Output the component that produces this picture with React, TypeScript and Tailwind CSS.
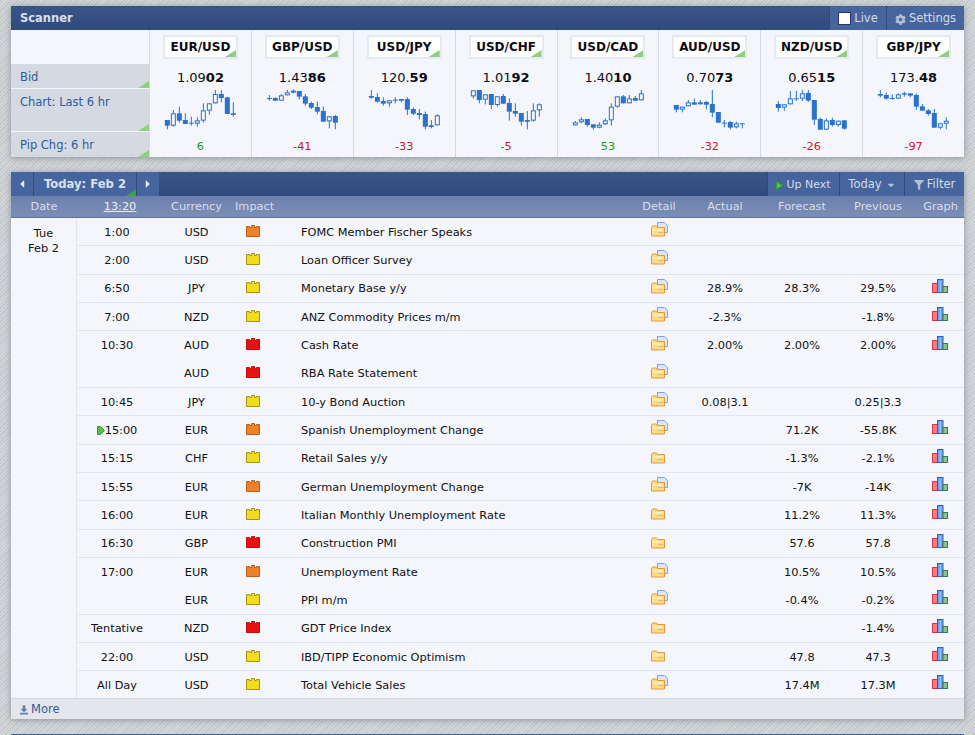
import React from 'react';
import { FaCaretDown, FaCaretLeft, FaCaretRight, FaCog, FaFilter } from 'react-icons/fa';

// candle = [wickTop, wickBottom, bodyTop, bodyBottom, hollow]  (units are 1/3 px)
type Candle = [number, number, number, number, number];

interface Pair {
  name: string;
  bidLight: string;
  bidBold: string;
  change: number;
  candles: Candle[];
}

const pairs: Pair[] = [
  {
    name: 'EUR/USD', bidLight: '1.09', bidBold: '02', change: 6,
    candles: [[105, 133, 105, 122, 0], [75, 125, 85, 122, 1], [65, 113, 85, 107, 0], [85, 117, 105, 117, 0], [95, 122, 113, 116, 0], [97, 125, 106, 116, 1], [55, 113, 76, 107, 1], [55, 89, 55, 77, 1], [15, 55, 27, 55, 1], [15, 52, 27, 39, 0], [37, 87, 37, 87, 0], [52, 95, 85, 90, 0]],
  },
  {
    name: 'GBP/USD', bidLight: '1.43', bidBold: '86', change: -41,
    candles: [[30, 47, 39, 42, 0], [37, 47, 39, 47, 0], [27, 47, 31, 47, 1], [15, 31, 22, 31, 1], [13, 25, 17, 23, 0], [18, 43, 18, 35, 0], [27, 62, 34, 56, 0], [50, 72, 54, 68, 0], [50, 88, 66, 80, 0], [64, 110, 78, 110, 0], [94, 130, 94, 109, 1], [90, 133, 93, 113, 0]],
  },
  {
    name: 'USD/JPY', bidLight: '120.', bidBold: '59', change: -33,
    candles: [[15, 41, 33, 38, 0], [25, 53, 36, 50, 0], [37, 62, 48, 56, 0], [46, 65, 46, 55, 1], [37, 55, 44, 46, 0], [42, 52, 42, 47, 0], [37, 90, 42, 74, 0], [67, 90, 72, 86, 0], [72, 103, 84, 90, 0], [80, 133, 87, 125, 0], [105, 130, 121, 126, 0], [88, 121, 91, 121, 1]],
  },
  {
    name: 'USD/CHF', bidLight: '1.01', bidBold: '92', change: -5,
    candles: [[16, 41, 16, 34, 1], [15, 55, 15, 45, 0], [28, 58, 28, 44, 1], [27, 72, 27, 60, 0], [34, 65, 34, 60, 1], [27, 56, 33, 56, 0], [40, 107, 54, 80, 0], [55, 95, 78, 86, 0], [84, 122, 84, 110, 0], [78, 133, 105, 110, 0], [55, 110, 76, 107, 1], [55, 95, 58, 76, 1]],
  },
  {
    name: 'USD/CAD', bidLight: '1.40', bidBold: '10', change: 53,
    candles: [[108, 121, 112, 121, 1], [97, 115, 103, 112, 1], [102, 125, 102, 120, 0], [118, 134, 118, 128, 0], [112, 130, 119, 128, 1], [100, 120, 106, 118, 1], [55, 122, 65, 106, 1], [34, 68, 34, 65, 1], [30, 55, 34, 55, 0], [30, 55, 40, 55, 1], [33, 47, 39, 47, 0], [15, 46, 25, 46, 1]],
  },
  {
    name: 'AUD/USD', bidLight: '0.70', bidBold: '73', change: -32,
    candles: [[60, 82, 60, 74, 0], [65, 82, 65, 74, 1], [45, 64, 52, 64, 1], [40, 59, 52, 59, 0], [45, 58, 52, 58, 1], [48, 73, 51, 59, 0], [15, 97, 57, 83, 0], [81, 113, 81, 113, 0], [105, 127, 113, 115, 0], [108, 133, 111, 128, 0], [110, 130, 115, 127, 1], [115, 130, 115, 116, 0]],
  },
  {
    name: 'NZD/USD', bidLight: '0.65', bidBold: '15', change: -26,
    candles: [[48, 80, 57, 69, 0], [58, 77, 58, 68, 1], [18, 58, 40, 58, 1], [17, 48, 40, 43, 0], [15, 48, 25, 41, 1], [15, 50, 24, 47, 0], [45, 120, 45, 104, 0], [98, 134, 102, 134, 0], [100, 134, 106, 134, 1], [98, 125, 105, 120, 0], [107, 125, 107, 120, 1], [106, 134, 106, 131, 0]],
  },
  {
    name: 'GBP/JPY', bidLight: '173.', bidBold: '48', change: -97,
    candles: [[15, 37, 27, 32, 0], [22, 44, 30, 41, 0], [28, 44, 39, 41, 0], [25, 41, 28, 41, 1], [20, 35, 25, 29, 0], [25, 37, 25, 32, 0], [25, 75, 30, 65, 0], [57, 77, 64, 77, 0], [72, 92, 76, 87, 0], [72, 128, 84, 128, 0], [115, 133, 115, 128, 1], [97, 133, 107, 116, 1]],
  },
];

type Impact = 'med' | 'low' | 'high';

interface EventRow {
  time: string;
  cur: string;
  impact: Impact;
  title: string;
  doc: boolean;
  actual?: string;
  forecast?: string;
  previous?: string;
  graph: boolean;
  noLine?: boolean;
  next?: boolean;
}

const rows: EventRow[] = [
  { time: '1:00', cur: 'USD', impact: 'med', title: 'FOMC Member Fischer Speaks', doc: true, graph: false },
  { time: '2:00', cur: 'USD', impact: 'low', title: 'Loan Officer Survey', doc: true, graph: false },
  { time: '6:50', cur: 'JPY', impact: 'low', title: 'Monetary Base y/y', doc: true, actual: '28.9%', forecast: '28.3%', previous: '29.5%', graph: true },
  { time: '7:00', cur: 'NZD', impact: 'low', title: 'ANZ Commodity Prices m/m', doc: true, actual: '-2.3%', previous: '-1.8%', graph: true },
  { time: '10:30', cur: 'AUD', impact: 'high', title: 'Cash Rate', doc: true, actual: '2.00%', forecast: '2.00%', previous: '2.00%', graph: true, noLine: true },
  { time: '', cur: 'AUD', impact: 'high', title: 'RBA Rate Statement', doc: true, graph: false },
  { time: '10:45', cur: 'JPY', impact: 'low', title: '10-y Bond Auction', doc: true, actual: '0.08|3.1', previous: '0.25|3.3', graph: false },
  { time: '15:00', cur: 'EUR', impact: 'med', title: 'Spanish Unemployment Change', doc: true, forecast: '71.2K', previous: '-55.8K', graph: true, next: true },
  { time: '15:15', cur: 'CHF', impact: 'low', title: 'Retail Sales y/y', doc: false, forecast: '-1.3%', previous: '-2.1%', graph: true },
  { time: '15:55', cur: 'EUR', impact: 'med', title: 'German Unemployment Change', doc: true, forecast: '-7K', previous: '-14K', graph: true },
  { time: '16:00', cur: 'EUR', impact: 'low', title: 'Italian Monthly Unemployment Rate', doc: false, forecast: '11.2%', previous: '11.3%', graph: true },
  { time: '16:30', cur: 'GBP', impact: 'high', title: 'Construction PMI', doc: false, forecast: '57.6', previous: '57.8', graph: true },
  { time: '17:00', cur: 'EUR', impact: 'med', title: 'Unemployment Rate', doc: true, forecast: '10.5%', previous: '10.5%', graph: true, noLine: true },
  { time: '', cur: 'EUR', impact: 'low', title: 'PPI m/m', doc: true, forecast: '-0.4%', previous: '-0.2%', graph: true },
  { time: 'Tentative', cur: 'NZD', impact: 'high', title: 'GDT Price Index', doc: false, previous: '-1.4%', graph: true },
  { time: '22:00', cur: 'USD', impact: 'low', title: 'IBD/TIPP Economic Optimism', doc: false, forecast: '47.8', previous: '47.3', graph: true },
  { time: 'All Day', cur: 'USD', impact: 'low', title: 'Total Vehicle Sales', doc: true, forecast: '17.4M', previous: '17.3M', graph: true },
];

const columns = 'grid grid-cols-[81px_77px_36px_359px_58px_74px_80px_72px_50px] items-center';

const Corner: React.FC = () => (
  <span className="absolute bottom-0 right-0 w-[11px] h-[7px] bg-[#8fd07f] [clip-path:polygon(100%_0,100%_100%,0_100%)]" />
);

const CandleChart: React.FC<{ candles: Candle[] }> = ({ candles }) => (
  <svg width="102" height="50" viewBox="0 0 306 150" className="block mx-auto">
    {candles.map(([wt, wb, bt, bb, hollow], i) => {
      const x = 52 + i * 18;
      return (
        <g key={i}>
          <rect x={x - 1.5} y={wt} width="3" height={wb - wt} fill="#2a72cc" />
          {hollow ? (
            <rect x={x - 6} y={bt + 1.5} width="12" height={Math.max(bb - bt - 3, 3)} fill="#f4f6fb" stroke="#2a72cc" strokeWidth="3" />
          ) : (
            <rect x={x - 7.5} y={bt} width="15" height={Math.max(bb - bt, 3)} fill="#2a72cc" />
          )}
        </g>
      );
    })}
  </svg>
);

const ImpactIcon: React.FC<{ level: Impact }> = ({ level }) => {
  const colors = {
    med: { fill: '#ee8127', line: '#b8601c' },
    low: { fill: '#f2dc1c', line: '#a69218' },
    high: { fill: '#e81010', line: '#c00d0d' },
  }[level];
  return (
    <svg width="14" height="12" viewBox="0 0 14 12" className="block mx-auto -mt-[2px]">
      <path
        d="M.5 1.500h3v1h2v-2h3v2h2v-1h3v10h-13z"
        fill={colors.fill}
        stroke={colors.line}
        strokeWidth="1"
      />
    </svg>
  );
};

const FolderIcon: React.FC<{ doc: boolean }> = ({ doc }) => (
  <svg width="17" height="15" viewBox="0 0 17 15" className="block mx-auto -mt-[4px]">
    {doc && <path d="M6.500 .5h7l3 3v7h-10z" fill="#d8e6f8" stroke="#7ea6de" strokeWidth="1" />}
    <path d="M.5 5.500v8.500h13v-8.500h-7l-1-1.500h-4z" fill="#fbdc8a" stroke="#e8963c" strokeWidth="1" />
    <path d="M2 8h10" stroke="#fff2c4" strokeWidth="1.500" />
    <path d="M7 10.500h5.500" stroke="#e8b85c" strokeWidth="1" />
  </svg>
);

const GraphIcon: React.FC = () => (
  <svg width="16" height="14" viewBox="0 0 16 14" className="block mx-auto">
    <rect x=".5" y="4.500" width="5" height="9" fill="#f57a86" stroke="#d8384c" />
    <rect x="5.500" y=".5" width="5.500" height="13" fill="#6aa4ec" stroke="#2d62bc" />
    <path d="M8.250 2v11" stroke="#a8ccf6" strokeWidth="1" />
    <rect x="11" y="7.500" width="4.500" height="6" fill="#8cc48c" stroke="#3c7c48" />
  </svg>
);

const BarButton: React.FC<{ className: string; children: React.ReactNode }> = ({ className, children }) => (
  <div className={`flex items-center justify-center h-full pt-[2px] bg-[#46659f] text-[#d5dce9] border-l border-[#2f4a7c] ${className}`}>
    {children}
  </div>
);

export default function App() {
  return (
    <div className="h-[735px] overflow-hidden pt-[6px] px-[11px] text-[11.33px] text-[#111111] font-['DejaVu_Sans','Liberation_Sans',sans-serif] bg-[repeating-linear-gradient(135deg,#c3c7ca_0px,#c3c7ca_1px,#d3d7d9_1px,#d3d7d9_2.500px)]">
      {/* Scanner */}
      <section className="w-[953px] h-[151px] bg-[#f4f6fb] shadow-[0_1px_6px_rgba(60,70,90,0.45)]">
        <div className="flex items-center justify-between h-[24px] bg-gradient-to-b from-[#3a5687] to-[#2f4a7c]">
          <div className="pl-[9px] pt-[2px] font-bold text-[11.5px] text-[#d8e0ee]">Scanner</div>
          <div className="flex h-full text-[11.5px]">
            <BarButton className="w-[57px] gap-[3px]">
              <span className="w-[13px] h-[13px] -mt-[1px] bg-white border border-[#28395c]" />
              <span>Live</span>
            </BarButton>
            <BarButton className="w-[78px] gap-[3px]">
              <FaCog className="w-[11px] h-[11px] text-[#b5bfd3]" />
              <span>Settings</span>
            </BarButton>
          </div>
        </div>
        <div className="flex">
          <div className="w-[138px] shrink-0 text-[11.5px] text-[#2e5c9e]">
            <div className="h-[34px]" />
            <div className="relative h-[24px] flex items-center pl-[9px] pt-[3px] bg-[#d5d9e2]">
              Bid
              <Corner />
            </div>
            <div className="relative h-[42px] mt-px pl-[9px] pt-[5px] bg-[#d5d9e2]">
              Chart: Last 6 hr
              <Corner />
            </div>
            <div className="relative h-[25px] mt-px flex items-center pl-[9px] pt-[2px] bg-[#d5d9e2]">
              Pip Chg: 6 hr
              <Corner />
            </div>
          </div>
          <div className="grid grid-cols-8 flex-1">
            {pairs.map((pair) => (
              <div key={pair.name} className="h-[127px] border-l border-[#d5d9e2] flex flex-col items-stretch">
                <div className="h-[34px] flex justify-center pt-[5px]">
                  <div className="relative w-[75px] h-[24px] flex items-center justify-center bg-white border-[2px] border-[#e6e9f1] font-bold text-[12px] text-[#0c0c14]">
                    {pair.name}
                    <Corner />
                  </div>
                </div>
                <div className="h-[21px] pt-[6px] text-center text-[13px] leading-[16px] text-[#0c0c14]">
                  {pair.bidLight}
                  <b>{pair.bidBold}</b>
                </div>
                <CandleChart candles={pair.candles} />
                <div className={`h-[22px] text-center leading-[22px] ${pair.change > 0 ? 'text-[#1d9a1d]' : 'text-[#d8102a]'}`}>
                  {pair.change}
                </div>
              </div>
            ))}
          </div>
        </div>
      </section>

      {/* Calendar */}
      <section className="w-[953px] h-[547px] mt-[15px] bg-[#f4f6fb] shadow-[0_1px_6px_rgba(60,70,90,0.45)]">
        <div className="flex justify-between h-[24px] bg-gradient-to-b from-[#3a5687] to-[#2f4a7c]">
          <div className="flex h-full">
            <div className="flex items-center justify-center w-[22px] bg-[#46659f] text-[#e4e9f2]">
              <FaCaretLeft className="w-[12px] h-[12px]" />
            </div>
            <div className="relative flex items-center justify-center w-[103px] pt-[2px] border-l border-[#2f4a7c] bg-[#46659f] font-bold text-[11.6px] text-[#d8e0ee]">
              Today: Feb 2
              <span className="absolute bottom-0 right-0 w-[10px] h-[7px] bg-[#3aa53a] [clip-path:polygon(100%_0,100%_100%,0_100%)]" />
            </div>
            <div className="flex items-center justify-center w-[23px] border-l border-[#2f4a7c] bg-[#46659f] text-[#e4e9f2]">
              <FaCaretRight className="w-[12px] h-[12px]" />
            </div>
          </div>
          <div className="flex h-full text-[11.5px]">
            <BarButton className="w-[72px] gap-[3px] text-[11px]">
              <svg width="7" height="9" viewBox="0 0 7 9">
                <path d="M.5.5l6 4-6 4z" fill="#5cc443" stroke="#2f9a2f" />
              </svg>
              <span>Up Next</span>
            </BarButton>
            <BarButton className="w-[65px] gap-[4px]">
              <span>Today</span>
              <FaCaretDown className="w-[10px] h-[10px] text-[#b5bfd3]" />
            </BarButton>
            <BarButton className="w-[60px] gap-[3px]">
              <FaFilter className="w-[10px] h-[10px] text-[#b5bfd3]" />
              <span>Filter</span>
            </BarButton>
          </div>
        </div>

        <div className="flex h-[22px] bg-gradient-to-b from-[#6c81ad] to-[#7b8eb7] border-b border-[#5f749f] text-[#d8deea]">
          <div className="w-[66px] text-center leading-[21px]">Date</div>
          <div className={`${columns} flex-1 text-center`}>
            <span className="pl-[5px] text-[#eef1f7] underline">13:20</span>
            <span>Currency</span>
            <span>Impact</span>
            <span />
            <span>Detail</span>
            <span>Actual</span>
            <span>Forecast</span>
            <span>Previous</span>
            <span className="pl-[3px]">Graph</span>
          </div>
        </div>

        <div className="flex h-[480px] overflow-hidden">
          <div className="w-[66px] shrink-0 pt-[8px] border-r border-[#e3e6ed] text-center leading-[15px]">
            <div>Tue</div>
            <div>Feb 2</div>
          </div>
          <div className="flex-1">
            {rows.map((row) => (
              <div
                key={row.title}
                className={`${columns} h-[28.33px] text-center ${row.noLine ? '' : 'border-b border-[#e3e6ed]'}`}
              >
                <div className={`relative -ml-px pt-[1px] ${row.next ? 'pl-[8px]' : ''}`}>
                  {row.next && (
                    <svg width="8" height="9" viewBox="0 0 8 9" className="absolute left-[21px] top-[5px]">
                      <path d="M.5.5h3l4 4-4 4h-3z" fill="#58c14a" stroke="#2f9a2f" />
                    </svg>
                  )}
                  {row.time}
                </div>
                <div className="pt-[1px]">{row.cur}</div>
                <ImpactIcon level={row.impact} />
                <div className="pl-[30px] pt-[1px] text-left whitespace-nowrap">{row.title}</div>
                <FolderIcon doc={row.doc} />
                <div className="pt-[1px]">{row.actual}</div>
                <div className="pt-[1px]">{row.forecast}</div>
                <div className="pt-[1px]">{row.previous}</div>
                <div className="pl-[2px] -mt-[5px]">{row.graph && <GraphIcon />}</div>
              </div>
            ))}
          </div>
        </div>

        <div className="flex items-center gap-[3px] h-[21px] pl-[9px] pt-[2px] bg-[#e4e6ec] border-t border-[#d5d8df] text-[11.5px] text-[#2e5c9e]">
          <svg width="8" height="10" viewBox="0 0 9 10">
            <path d="M3 0h3v4h2.500l-4 3.500-4-3.500h2.500zM0 8h9v2h-9z" fill="#5d7fb4" />
          </svg>
          <span>More</span>
        </div>
      </section>

      <div className="w-[953px] h-[20px] mt-[15px] bg-[#3f5f9a]" />
    </div>
  );
}
